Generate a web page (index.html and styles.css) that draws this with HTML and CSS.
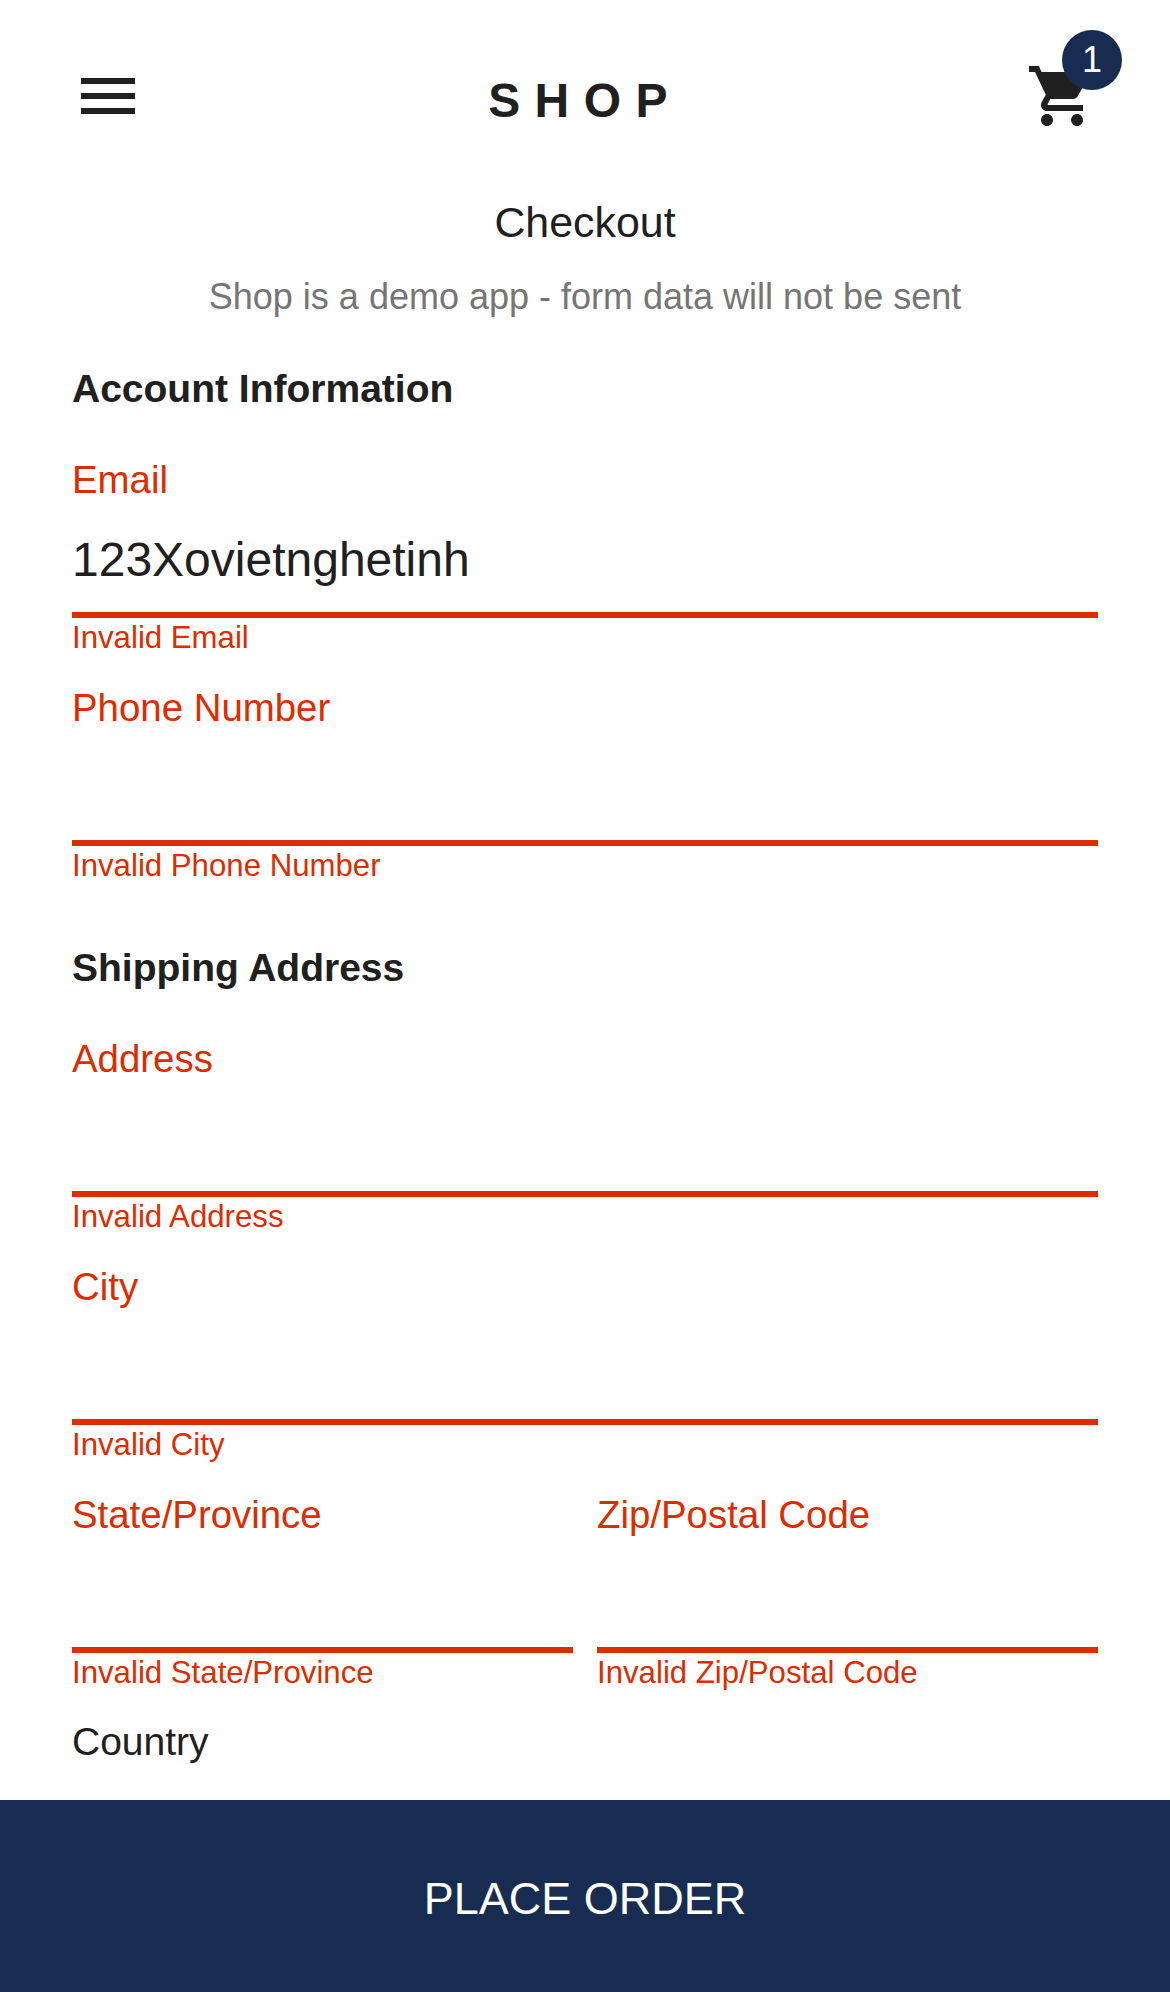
FILE: index.html
```html
<!DOCTYPE html>
<html lang="en">
<head>
<meta charset="utf-8">
<title>Checkout - SHOP</title>
<link rel="stylesheet" href="styles.css">
</head>
<body>
<header class="header">
  <button class="icon-button" aria-label="Menu">
    <svg class="icon" viewBox="0 0 24 24"><path d="M3 18h18v-2H3v2zm0-5h18v-2H3v2zm0-7v2h18V6H3z"/></svg>
  </button>
  <h1 class="logo">SHOP</h1>
  <button class="icon-button" aria-label="Shopping cart">
    <svg class="icon" viewBox="0 0 24 24"><path d="M7 18c-1.1 0-1.99.9-1.99 2S5.9 22 7 22s2-.9 2-2-.9-2-2-2zM1 2v2h2l3.6 7.59-1.35 2.45c-.16.28-.25.61-.25.96 0 1.1.9 2 2 2h12v-2H7.42c-.14 0-.25-.11-.25-.25l.03-.12.9-1.63h7.45c.75 0 1.41-.41 1.75-1.03l3.58-6.49c.08-.14.12-.31.12-.48 0-.55-.45-1-1-1H5.21l-.94-2H1zm16 16c-1.1 0-1.99.9-1.99 2s.89 2 1.99 2 2-.9 2-2-.9-2-2-2z"/></svg>
    <span class="badge">1</span>
  </button>
</header>
<main class="checkout">
  <h2 class="title">Checkout</h2>
  <p class="note">Shop is a demo app - form data will not be sent</p>

  <h3 class="section-title">Account Information</h3>
  <div class="field">
    <label class="label" for="email">Email</label>
    <input class="input" id="email" type="text" value="123Xovietnghetinh" spellcheck="false">
    <span class="error">Invalid Email</span>
  </div>
  <div class="field">
    <label class="label" for="phone">Phone Number</label>
    <input class="input" id="phone" type="text">
    <span class="error">Invalid Phone Number</span>
  </div>

  <h3 class="section-title">Shipping Address</h3>
  <div class="field">
    <label class="label" for="address">Address</label>
    <input class="input" id="address" type="text">
    <span class="error">Invalid Address</span>
  </div>
  <div class="field">
    <label class="label" for="city">City</label>
    <input class="input" id="city" type="text">
    <span class="error">Invalid City</span>
  </div>
  <div class="field-row">
    <div class="field">
      <label class="label" for="state">State/Province</label>
      <input class="input" id="state" type="text">
      <span class="error">Invalid State/Province</span>
    </div>
    <div class="field">
      <label class="label" for="zip">Zip/Postal Code</label>
      <input class="input" id="zip" type="text">
      <span class="error">Invalid Zip/Postal Code</span>
    </div>
  </div>
  <div class="country">Country</div>
</main>
<button class="place-order">PLACE ORDER</button>
</body>
</html>
```

FILE: styles.css
```css
* {
  box-sizing: border-box;
}

body {
  display: flex;
  flex-direction: column;
  height: 1992px;
  margin: 0;
  overflow: hidden;
  background: #fff;
  color: #202020;
  font-family: "Liberation Sans", Arial, sans-serif;
  font-size: 39px;
}

h1,
h2,
h3,
p {
  margin: 0;
}

button {
  padding: 0;
  border: 0;
  background: none;
  color: inherit;
  font-family: inherit;
}

.header {
  display: flex;
  align-items: center;
  justify-content: space-between;
  height: 192px;
  padding: 0 72px;
}

.icon-button {
  position: relative;
  width: 72px;
  height: 72px;
}

.icon {
  display: block;
  width: 72px;
  height: 72px;
  fill: #202020;
}

.badge {
  position: absolute;
  top: -30px;
  right: -24px;
  width: 60px;
  height: 60px;
  border-radius: 50%;
  background: #172c50;
  color: #fff;
  font-size: 36px;
  line-height: 60px;
  text-align: center;
}

.logo {
  padding-top: 10px;
  font-size: 48px;
  line-height: 60px;
  letter-spacing: 0.3em;
}

.checkout {
  flex: 1;
  padding: 0 72px;
}

.title {
  font-size: 42.9px;
  font-weight: 400;
  line-height: 60px;
  text-align: center;
}

.note {
  margin-top: 14px;
  color: #757575;
  font-size: 36px;
  line-height: 61px;
  text-align: center;
}

.section-title {
  font-size: 39px;
  line-height: 123px;
}

.field {
  display: flex;
  flex: 1;
  flex-direction: column;
  min-width: 0;
  height: 228px;
}

.field-row {
  display: flex;
  gap: 24px;
}

.label {
  color: #dd2c00;
  font-size: 38.4px;
  line-height: 60px;
}

.input {
  width: 100%;
  height: 108px;
  padding: 0 0 3px;
  border: 0;
  border-bottom: 6px solid #dd2c00;
  border-radius: 0;
  outline: 0;
  background: none;
  color: inherit;
  font-family: inherit;
  font-size: 48px;
}

.error {
  color: #dd2c00;
  font-size: 31.2px;
  line-height: 40px;
}

.country {
  line-height: 57px;
}

.place-order {
  height: 192px;
  padding-top: 6px;
  background: #172c50;
  color: #fff;
  font-size: 45px;
}
```
